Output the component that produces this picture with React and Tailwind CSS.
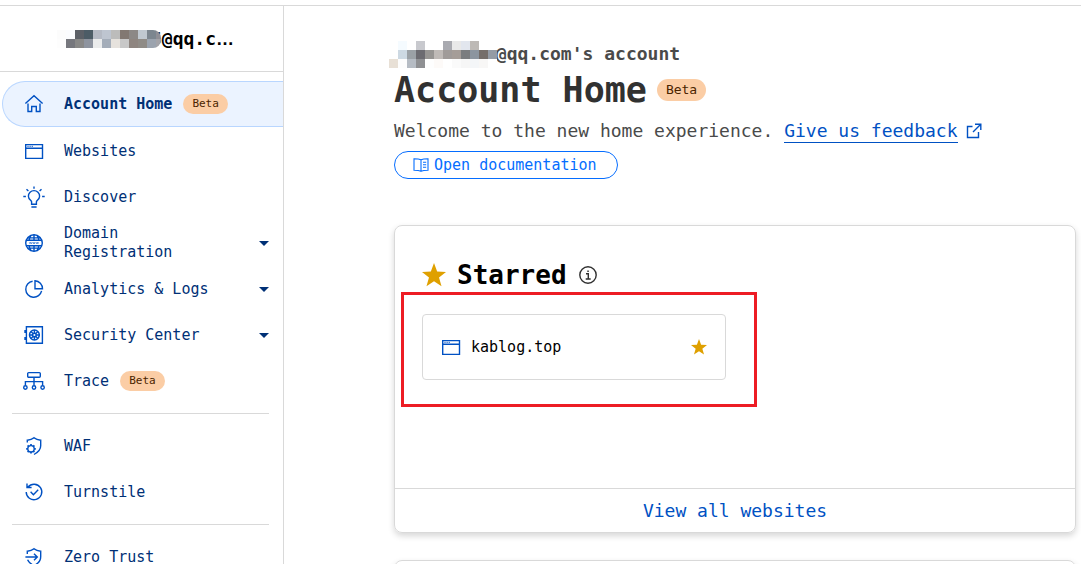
import React from 'react';

const SIDE_TILES = [
  ['#fcfcfc', '#fbfcfe', '#5c6067', '#4c5c66', '#b5bac4', '#bec5d0', '#bcbcbb', '#827872', '#8c8886', '#c0c8d0', '#7c868f', '#8f8f96'],
  ['#fdfdfd', '#76777d', '#888887', '#8e949f', '#ebecec', '#a4adb9', '#e6e2dd', '#c8c8c8', '#8e8580', '#8f8b86', '#9ba3ae', '#a3a3a8'],
];
const HEAD_TILES = [
  ['#ffffff', '#f5fbff', '#ffffff', '#c8c9ce', '#ffffff', '#ffffff', '#a9aab0', '#e9e9e9', '#e2e6ee', '#bdb9b5', '#ffffff', '#ffffff'],
  ['#ffffff', '#cdd9e3', '#9ba1a6', '#6c6b71', '#979593', '#bfbab7', '#a09b99', '#a59d98', '#7b7d7f', '#8c959f', '#756e6a', '#949ba5'],
  ['#e8e0d6', '#fdfdfd', '#b6bcc4', '#8f9093', '#fefefe', '#fdfaf8', '#ffffff', '#fafafa', '#f6f6f6', '#f4f6f8', '#f8f7f6', '#ffffff'],
];

function Mosaic({ rows, id, trim = 0, className }) {
  const w = rows[0].length * 9;
  const h = rows.length * 9;
  return (
    <svg aria-hidden="true" width={w} height={h} viewBox={`0 0 ${w} ${h}`} className={className}>
      <clipPath id={id}><rect x="-8" width={w + 8 - trim} height={h} rx={trim ? 8 : 2} /></clipPath>
      <g clipPath={`url(#${id})`} shapeRendering="crispEdges">
        {rows.map((row, y) => row.map((c, x) => <rect key={`${x}-${y}`} x={x * 9} y={y * 9} width="9" height="9" fill={c} />))}
      </g>
    </svg>
  );
}

function Icon({ children, size = 22, className = 'text-[#0051c3]' }) {
  return (
    <svg aria-hidden="true" width={size} height={size} viewBox={`0 0 ${size} ${size}`} fill="none" stroke="currentColor" strokeWidth="1.4" className={`shrink-0 ${className}`}>
      {children}
    </svg>
  );
}

const HomeIcon = () => (
  <Icon><path d="M2.400 10.500 11 2.800l8.600 7.700M5 10.600v7.900h3.700v-5h4.600v5H17v-7.900M8.700 18.500H5M17 18.500h-3.700" /></Icon>
);
const WindowIcon = () => (
  <Icon>
    <path d="M2.700 4.600h16.800v13.800H2.700zM2.700 8.200h16.800" />
    <path d="M4.500 6.400h1M6.600 6.400h1M8.700 6.400h1" />
  </Icon>
);
const BulbIcon = () => (
  <Icon>
    <path d="M8.600 18.200v-2.400c0-1.200-3.200-2.400-3.200-5.600a5.600 5.600 0 0 1 11.200 0c0 3.200-3.200 4.400-3.200 5.600v2.400zM8.400 21h5.200" />
    <path d="M11 .4v2.300M.3 10.500h2.600M19.100 10.500h2.600M3.500 3.200l1.900 1.900M18.500 3.200l-1.900 1.900" />
  </Icon>
);
const GlobeIcon = () => (
  <Icon>
    <circle cx="11" cy="11" r="8.300" />
    <path d="M11 2.700v5.600M11 13.700v5.600M8 3.300C6.900 4.800 6.300 6.500 6.200 8.300M14 3.300c1.100 1.500 1.700 3.200 1.800 5M6.200 13.700c.2 2 .8 3.600 1.900 5M15.800 13.700c-.2 2-.8 3.600-1.900 5M4.500 5.900h13M4.500 16.100h13M3 8.300h16M3 13.700h16" />
    <path d="M6.300 10.300l.7 1.400.7-1.400.7 1.400.7-1.400M9.800 10.300l.6 1.400.6-1.400.6 1.400.6-1.400M13.100 10.300l.6 1.400.6-1.400.6 1.400.6-1.400" strokeWidth=".6" />
  </Icon>
);
const PieIcon = () => (
  <Icon><path d="M9.600 3.300a8 8 0 1 0 9 9.600M12 2.700v8.100h7.500A8 8 0 0 0 12 2.700z" /></Icon>
);
const SafeIcon = () => (
  <Icon>
    <path d="M3.400 2.700h16v16.600h-16zM2 6v3M2 13v3" />
    <circle cx="11.400" cy="11" r="4.900" strokeWidth="1.500" />
    <circle cx="11.400" cy="11" r="1.800" strokeWidth="1.500" />
    <path d="M11.400 6v3M11.400 13v3M6.500 11h3M13.400 11h3M8 7.600l2 2M12.800 12.400l2 2M14.800 7.600l-2 2M10 12.400l-2 2" />
  </Icon>
);
const TraceIcon = () => (
  <Icon>
    <rect x="4.700" y="2.600" width="12.600" height="4.600" rx="1" />
    <path d="M11 7.200v8.300M2.400 15.500v-3.900h17.200v3.900" />
    <circle cx="2.400" cy="17.500" r="1.700" /><circle cx="11" cy="17.500" r="1.700" /><circle cx="19.600" cy="17.500" r="1.700" />
  </Icon>
);
const WafIcon = () => (
  <Icon>
    <path d="M4.300 7.500V5.200c2.800-.1 5-.9 6.700-2.400 1.700 1.500 3.900 2.300 6.700 2.400v5.600c0 4-2.600 6.600-6.700 8.700" />
    <circle cx="8" cy="13.800" r="3.200" />
    <path d="M8 9v1.600M8 17v1.600M3.200 13.800h1.600M11.200 13.800h1.600M4.600 10.400l1.200 1.200M10.200 16l1.200 1.200M11.400 10.400l-1.200 1.200M5.800 16l-1.200 1.200" strokeWidth="1.700" />
  </Icon>
);
const TurnstileIcon = () => (
  <Icon><path d="M5 6A7.800 7.800 0 1 1 3.200 11M4 2.500v4h4.600M7.600 10.800l2.800 2.900 4.800-4.900" /></Icon>
);
const ZeroIcon = () => (
  <Icon><path d="M4.300 8V5.200c2.800-.1 5-.9 6.700-2.400 1.700 1.500 3.900 2.300 6.700 2.400v5.600c0 4-2.900 7-6.700 8.700-3-1.300-5.300-3.200-6.400-5.700M2.400 11h11.800M11 7.700l3.300 3.300-3.300 3.300" /></Icon>
);
const Star = ({ size }) => (
  <svg aria-hidden="true" width={size} height={size} viewBox="0 0 22 22" fill="#dfa000" className="shrink-0">
    <path d="M11 0l2.900 7.900 8.100.3-6.400 5.100 2.300 8.100L11 16.800l-6.900 4.600 2.300-8.100L0 8.200l8.100-.3z" />
  </svg>
);

const Beta = ({ large }) => (
  <span className={`rounded-full bg-[#fbcda5] text-[#4a2400] ${large ? 'px-[9px] text-[13px] leading-[22px]' : 'px-[9px] text-[11px] leading-5'}`}>Beta</span>
);

const GROUPS = [
  [
    { label: 'Account Home', icon: HomeIcon, beta: true, active: true },
    { label: 'Websites', icon: WindowIcon },
    { label: 'Discover', icon: BulbIcon },
    { label: 'Domain Registration', icon: GlobeIcon, expandable: true },
    { label: 'Analytics & Logs', icon: PieIcon, expandable: true },
    { label: 'Security Center', icon: SafeIcon, expandable: true },
    { label: 'Trace', icon: TraceIcon, beta: true },
  ],
  [
    { label: 'WAF', icon: WafIcon },
    { label: 'Turnstile', icon: TurnstileIcon },
  ],
  [{ label: 'Zero Trust', icon: ZeroIcon }],
];

function NavItem({ label, icon: Glyph, beta, active, expandable }) {
  const base = 'flex h-[46px] items-center text-[15px] leading-[19px] text-[#003076]';
  if (expandable) {
    return (
      <button type="button" aria-expanded="false" className={`${base} w-full pl-[23px] pr-3.5 pt-0.5`}>
        <Glyph />
        <span className="w-44 pl-[19px] text-left">{label}</span>
        <svg aria-hidden="true" width="10" height="5" viewBox="0 0 10 5" fill="currentColor" className="ml-auto"><path d="M0 0h10L5 5z" /></svg>
      </button>
    );
  }
  return (
    <a href="#" aria-current={active ? 'page' : undefined} className={`${base} ${active ? 'ml-0.5 rounded-l-full border border-r-0 border-[#b9d6ff] bg-[#ebf3ff] pl-5 font-bold' : 'pl-[23px] pt-0.5'}`}>
      <Glyph />
      <span className="pl-[19px] pr-[11px]">{label}</span>
      {beta && <span className="flex font-normal"><Beta /></span>}
    </a>
  );
}

export default function App() {
  return (
    <div className="h-screen overflow-hidden bg-white pt-[5px] font-['DejaVu_Sans_Mono','Liberation_Mono',monospace]">
      <div className="flex h-full border-t border-[#d9d9d9]">
        <aside className="w-[284px] shrink-0 overflow-hidden border-r border-[#d9d9d9]">
          <div className="flex h-[66px] items-center border-b border-[#d9d9d9] pl-[57px] text-lg font-bold text-black">
            <Mosaic rows={SIDE_TILES} id="side-mask" trim={4} className="relative z-10 -mr-3.5 shrink-0" />
            <span>5@qq.c<span className="font-['Liberation_Sans',sans-serif]">…</span></span>
          </div>
          <nav className="pt-[9px]">
            {GROUPS.map((group, i) => (
              <div key={i}>
                {i > 0 && <hr className="mb-2 ml-3 mr-3.5 mt-2.5 border-[#d9d9d9]" />}
                {group.map((item) => <NavItem key={item.label} {...item} />)}
              </div>
            ))}
          </nav>
        </aside>

        <main className="min-w-0 flex-1 overflow-hidden pl-[110px] pr-[5px] pt-[33px]">
          <div className="-ml-[5px] flex h-[30px] items-center text-lg font-bold text-[#4a4a4a]">
            <Mosaic rows={HEAD_TILES} id="head-mask" className="relative z-10 -mr-3 shrink-0" />
            <span>5@qq.com's account</span>
          </div>
          <div className="flex items-center gap-2.5">
            <h1 className="text-[35px] font-bold leading-[42px] text-[#313131]">Account Home</h1>
            <Beta large />
          </div>
          <p className="flex items-center whitespace-nowrap pt-2 text-lg leading-6 text-[#4a4a4a]">
            <span className="whitespace-pre">Welcome to the new home experience. </span>
            <a href="#" className="flex items-center gap-2 text-[#0051c3]">
              <span className="border-b border-[#0051c3] leading-[22px]">Give us feedback</span>
              <Icon size={16}><path d="M6.500 3.500h-5v11h11V9M9 1.200h5.800V7M14.500 1.500 7 9" /></Icon>
            </a>
          </p>
          <button type="button" className="mt-2 flex h-7 items-center gap-[5px] rounded-full border border-[#056dff] pl-[18px] pr-5 text-[15px] text-[#056dff]">
            <Icon size={16} className="text-[#056dff]">
              <path strokeWidth="1.100" d="M8 2.700C6.500 2 4 1.700 1 1.700v11.600c3 0 5.500.3 7 1 1.500-.7 4-1 7-1V1.700c-3 0-5.500.3-7 1zM8 2.700v11.600M10 5.200h3.200M10 7.700h3.200M10 10.200h3.200" />
            </Icon>
            Open documentation
          </button>

          <section className="mt-[46px] rounded-lg border border-[#d9d9d9] shadow-[0_3px_6px_rgba(0,0,0,0.16)]">
            <div className="px-[27px] pb-[108px] pt-[31px]">
              <div className="flex h-9 items-center">
                <Star size={24} />
                <h2 className="pl-[11px] pr-3 text-[26px] font-bold leading-9 text-black">Starred</h2>
                <Icon size={18} className="text-[#313131]">
                  <circle cx="9" cy="9" r="8.200" />
                  <path d="M7 7.800h2.300v5M6.700 13h5M8.300 5.200h1.500" />
                </Icon>
              </div>
              <div className="relative mt-[21px] flex h-[66px] w-[304px] items-center rounded border border-[#d9d9d9] pl-[17px] pr-[18px]">
                <WindowIcon />
                <a href="#" className="pl-[9px] text-[15px] text-black">kablog.top</a>
                <button type="button" aria-label="Unstar kablog.top" className="ml-auto"><Star size={16} /></button>
                <div aria-hidden="true" className="pointer-events-none absolute -bottom-7 -left-[22px] -right-8 -top-[23px] border-[3px] border-[#ed1c24]" />
              </div>
            </div>
            <a href="#" className="flex h-11 items-center justify-center border-t border-[#d9d9d9] text-lg text-[#0051c3]">View all websites</a>
          </section>
          <section className="mt-[27px] h-40 rounded-lg border border-[#d9d9d9] shadow-[0_3px_6px_rgba(0,0,0,0.16)]" />
        </main>
      </div>
    </div>
  );
}
